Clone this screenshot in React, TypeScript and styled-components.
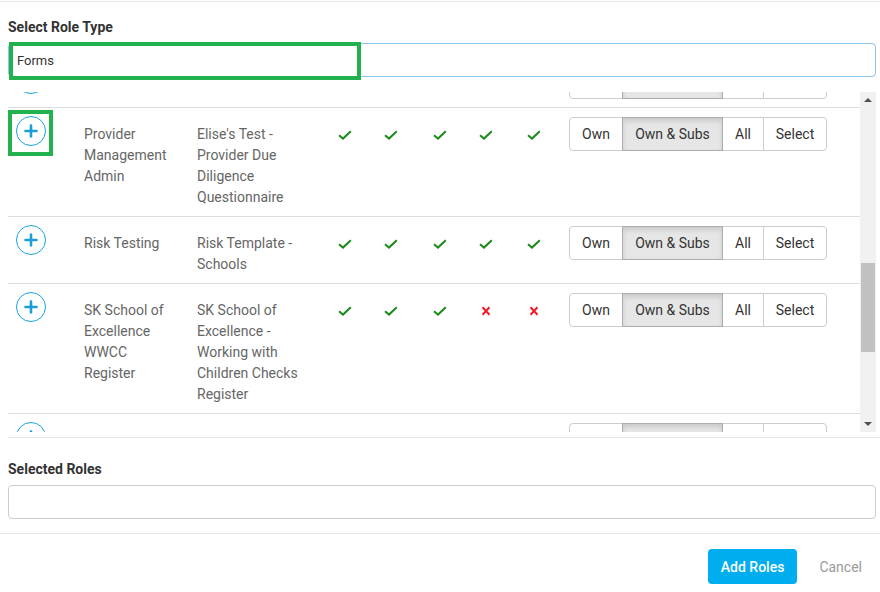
import React from "react";
import styled, { createGlobalStyle, css } from "styled-components";

type Perm = boolean;

type RoleRow = {
  name: string;
  form: string;
  perms: Perm[];
};

const GlobalStyle = createGlobalStyle`
  * {
    box-sizing: border-box;
  }
  body {
    margin: 0;
    background: #fff;
    font-family: Roboto, "Liberation Sans", Arial, sans-serif;
    color: #333;
  }
`;

const Modal = styled.div`
  width: 880px;
  height: 592px;
  overflow: hidden;
  display: flex;
  flex-direction: column;
`;

const TopRule = styled.div`
  height: 2px;
  border-bottom: 1px solid #e5e5e5;
`;

const Body = styled.div`
  padding: 16px 4px 0 8px;
`;

const Label = styled.div`
  font-size: 14px;
  font-weight: 700;
  line-height: 18px;
  color: #333;
  margin-bottom: 7px;
`;

const FieldWrap = styled.div`
  position: relative;
`;

const TextField = styled.div<{ $focused?: boolean }>`
  height: 34px;
  border: 1px solid #ccc;
  border-radius: 4px;
  padding: 0 8px;
  display: flex;
  align-items: center;
  font-size: 13px;
  color: #333;

  ${(p) =>
    p.$focused &&
    css`
      border-color: #8cc4ee;
    `}
`;

const Highlight = styled.div<{ $left: number; $top: number; $w: number; $h: number }>`
  position: absolute;
  left: ${(p) => p.$left}px;
  top: ${(p) => p.$top}px;
  width: ${(p) => p.$w}px;
  height: ${(p) => p.$h}px;
  border: 4px solid #22b14c;
  pointer-events: none;
`;

const ScrollSection = styled.div`
  margin-top: 15px;
  margin-right: -4px;
  padding-bottom: 5px;
  border-bottom: 1px solid #e5e5e5;
`;

const ScrollFrame = styled.div`
  display: flex;
  width: 868px;
  height: 340px;
`;

const Viewport = styled.div`
  flex: 1;
  overflow: hidden;
`;

const List = styled.div`
  margin-top: -36px;
`;

const Row = styled.div`
  display: flex;
  align-items: flex-start;
  border-bottom: 1px solid #ddd;
`;

const IconCell = styled.div`
  position: relative;
  width: 76px;
  flex-shrink: 0;
  padding: 8px 0 8px 8px;
`;

const AddCircle = styled.div`
  width: 30px;
  height: 30px;
  border-radius: 50%;
  border: 1px solid #1aa3d9;
  display: flex;
  align-items: center;
  justify-content: center;
`;

const TextCell = styled.div<{ $w: number; $gap: number }>`
  width: ${(p) => p.$w}px;
  flex-shrink: 0;
  padding: 16px ${(p) => p.$gap}px 8px 0;
  font-size: 14px;
  line-height: 21px;
  color: #666;
`;

const PermCell = styled.div<{ $w: number }>`
  width: ${(p) => p.$w}px;
  flex-shrink: 0;
  padding-top: 22px;
  display: flex;
  justify-content: center;
`;

const ActionCell = styled.div`
  padding: 9px 0 8px 7px;
`;

const BtnGroup = styled.div`
  display: flex;
`;

const GroupBtn = styled.div<{ $active?: boolean; $w: number }>`
  width: ${(p) => p.$w}px;
  height: 34px;
  display: flex;
  align-items: center;
  justify-content: center;
  font-size: 14px;
  color: #333;
  background: #fff;
  border: 1px solid #ccc;
  margin-left: -1px;

  &:first-child {
    margin-left: 0;
    border-radius: 4px 0 0 4px;
  }
  &:last-child {
    border-radius: 0 4px 4px 0;
  }

  ${(p) =>
    p.$active &&
    css`
      background: #e6e6e6;
      border-color: #adadad;
      box-shadow: inset 0 3px 5px rgba(0, 0, 0, 0.125);
      position: relative;
    `}
`;

const ScrollBar = styled.div`
  width: 16px;
  background: #f1f1f1;
  display: flex;
  flex-direction: column;
`;

const Arrow = styled.div<{ $down?: boolean }>`
  height: 16px;
  display: flex;
  align-items: center;
  justify-content: center;

  &::before {
    content: "";
    width: 0;
    height: 0;
    border-left: 4px solid transparent;
    border-right: 4px solid transparent;
    ${(p) =>
      p.$down
        ? css`
            border-top: 4px solid #505050;
          `
        : css`
            border-bottom: 4px solid #505050;
          `}
  }
`;

const Track = styled.div`
  flex: 1;
  padding: 0 1px;
`;

const Thumb = styled.div`
  margin-top: 155px;
  height: 89px;
  background: #c1c1c1;
`;

const LowerSection = styled.div`
  padding: 22px 4px 14px 8px;
  border-bottom: 1px solid #e5e5e5;
`;

const Footer = styled.div`
  display: flex;
  justify-content: flex-end;
  align-items: center;
  padding-top: 15px;
`;

const PrimaryBtn = styled.div`
  height: 35px;
  padding: 0 13px;
  display: flex;
  align-items: center;
  background: #00aeef;
  color: #fff;
  font-size: 14px;
  font-weight: 500;
  border-radius: 4px;
`;

const LinkBtn = styled.div`
  padding: 0 18px 0 22px;
  font-size: 14px;
  color: #9a9a9a;
`;

const permWidths = [46, 46, 52, 40, 56];

const rows: RoleRow[] = [
  { name: "Audit", form: "Audit Form", perms: [true, true, true, true, true] },
  {
    name: "Provider Management Admin",
    form: "Elise's Test - Provider Due Diligence Questionnaire",
    perms: [true, true, true, true, true],
  },
  { name: "Risk Testing", form: "Risk Template - Schools", perms: [true, true, true, true, true] },
  {
    name: "SK School of Excellence WWCC Register",
    form: "SK School of Excellence - Working with Children Checks Register",
    perms: [true, true, true, false, false],
  },
  { name: "Staff Induction", form: "Staff Induction Form", perms: [true, true, true, true, true] },
];

function PlusIcon() {
  return (
    <svg width="14" height="14" viewBox="0 0 14 14">
      <path d="M7 1.5v11M1.5 7h11" stroke="#1a9fd4" strokeWidth="2.6" strokeLinecap="round" />
    </svg>
  );
}

function CheckIcon() {
  return (
    <svg width="14" height="10" viewBox="0 0 14 10">
      <path d="M1 5.2 L5 8.6 L12.8 1.2" fill="none" stroke="#1c8a1c" strokeWidth="2" />
    </svg>
  );
}

function CrossIcon() {
  return (
    <svg width="14" height="10" viewBox="0 0 14 10">
      <path d="M3.5 1.3 L10.5 8.7 M10.5 1.3 L3.5 8.7" stroke="#ee1c25" strokeWidth="2" />
    </svg>
  );
}

function App() {
  return (
    <Modal>
      <GlobalStyle />
      <TopRule />
      <Body>
        <Label>Select Role Type</Label>
        <FieldWrap>
          <TextField $focused>Forms</TextField>
          <Highlight $left={1} $top={-1} $w={352} $h={38} />
        </FieldWrap>

        <ScrollSection>
          <ScrollFrame>
            <Viewport>
              <List>
                {rows.map((row, i) => (
                  <Row key={row.name}>
                    <IconCell>
                      <AddCircle>
                        <PlusIcon />
                      </AddCircle>
                      {i === 1 && <Highlight $left={0} $top={2} $w={45} $h={46} />}
                    </IconCell>
                    <TextCell $w={113} $gap={18}>
                      {row.name}
                    </TextCell>
                    <TextCell $w={125} $gap={12}>
                      {row.form}
                    </TextCell>
                    {row.perms.map((ok, j) => (
                      <PermCell key={j} $w={permWidths[j]}>
                        {ok ? <CheckIcon /> : <CrossIcon />}
                      </PermCell>
                    ))}
                    <ActionCell>
                      <BtnGroup>
                        <GroupBtn $w={54}>Own</GroupBtn>
                        <GroupBtn $w={101} $active>
                          Own &amp; Subs
                        </GroupBtn>
                        <GroupBtn $w={42}>All</GroupBtn>
                        <GroupBtn $w={64}>Select</GroupBtn>
                      </BtnGroup>
                    </ActionCell>
                  </Row>
                ))}
              </List>
            </Viewport>
            <ScrollBar>
              <Arrow />
              <Track>
                <Thumb />
              </Track>
              <Arrow $down />
            </ScrollBar>
          </ScrollFrame>
        </ScrollSection>
      </Body>

      <LowerSection>
        <Label>Selected Roles</Label>
        <TextField />
      </LowerSection>

      <Footer>
        <PrimaryBtn>Add Roles</PrimaryBtn>
        <LinkBtn>Cancel</LinkBtn>
      </Footer>
    </Modal>
  );
}

export default App;
